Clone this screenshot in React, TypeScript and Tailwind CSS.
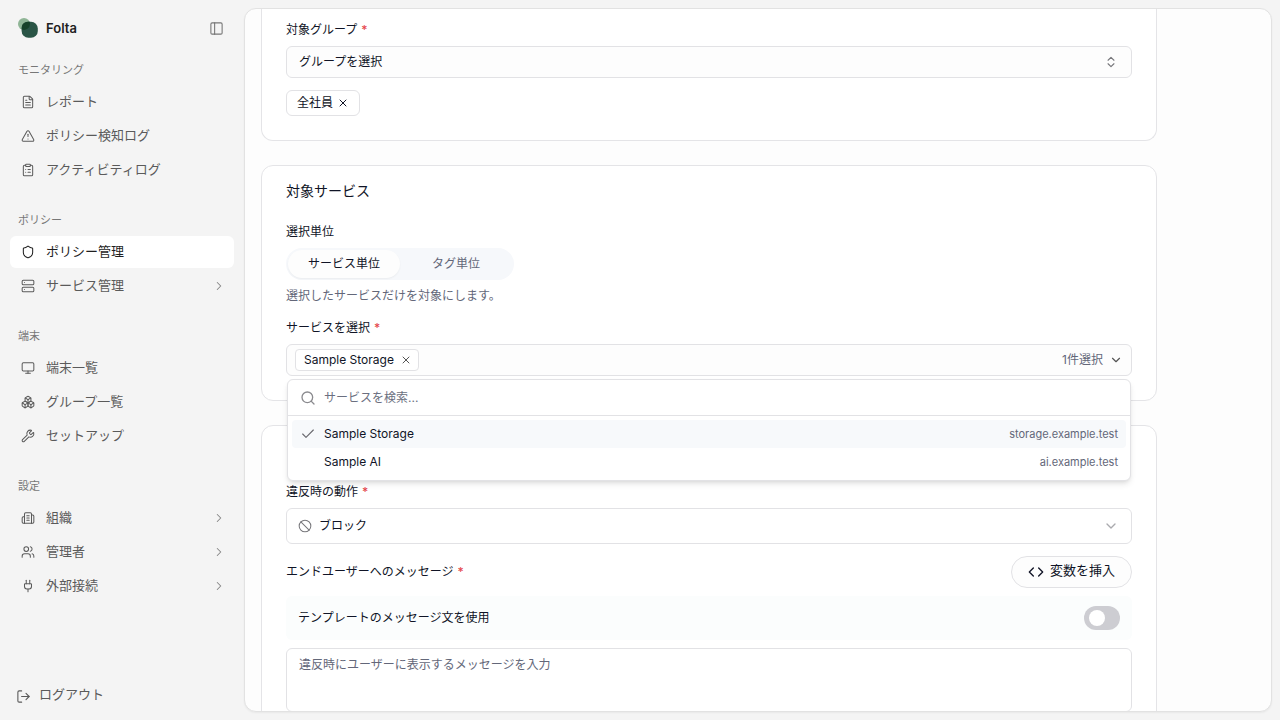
import { useState, type ReactNode } from "react";
import {
  Ban, Boxes, Check, ChevronDown, ChevronRight, ChevronsUpDown, ClipboardList, Code, FileText,
  LogOut, Monitor, PanelLeft, Plug, Search, Server, Shield, TriangleAlert, Users, Wrench, X,
  type LucideIcon,
} from "lucide-react";

function OrgIcon({ className }: { className?: string }) {
  return (
    <svg viewBox="0 0 24 24" fill="none" stroke="currentColor" strokeWidth="1.75" strokeLinecap="round" strokeLinejoin="round" className={className} aria-hidden="true">
      <path d="M10 12h4" />
      <path d="M10 8h4" />
      <path d="M10 16h4" />
      <path d="M6 10H4a2 2 0 0 0-2 2v7a2 2 0 0 0 2 2h16a2 2 0 0 0 2-2V9a2 2 0 0 0-2-2h-2" />
      <path d="M6 21V5a2 2 0 0 1 2-2h8a2 2 0 0 1 2 2v16" />
    </svg>
  );
}

type Item = { label: string; icon: LucideIcon | typeof OrgIcon; active?: boolean; expandable?: boolean };

const groups: { title: string; items: Item[] }[] = [
  {
    title: "モニタリング",
    items: [
      { label: "レポート", icon: FileText },
      { label: "ポリシー検知ログ", icon: TriangleAlert },
      { label: "アクティビティログ", icon: ClipboardList },
    ],
  },
  {
    title: "ポリシー",
    items: [
      { label: "ポリシー管理", icon: Shield, active: true },
      { label: "サービス管理", icon: Server, expandable: true },
    ],
  },
  {
    title: "端末",
    items: [
      { label: "端末一覧", icon: Monitor },
      { label: "グループ一覧", icon: Boxes },
      { label: "セットアップ", icon: Wrench },
    ],
  },
  {
    title: "設定",
    items: [
      { label: "組織", icon: OrgIcon, expandable: true },
      { label: "管理者", icon: Users, expandable: true },
      { label: "外部接続", icon: Plug, expandable: true },
    ],
  },
];

const services = [
  { name: "Sample Storage", host: "storage.example.test", selected: true },
  { name: "Sample AI", host: "ai.example.test", selected: false },
];

function Logo() {
  return (
    <svg viewBox="0 0 20 20" className="size-5" aria-hidden="true">
      <circle cx="6" cy="6" r="6" fill="#8fb596" />
      <rect x="3.6" y="3.8" width="16.2" height="16" rx="6.8" fill="#2a5546" />
      <path d="M12 6a6 6 0 0 1-8 5.6C3 8 5 3.800 10 3.800h1.600A6 6 0 0 1 12 6Z" fill="#17432a" />
    </svg>
  );
}

function Sidebar() {
  return (
    <aside className="flex w-[244px] shrink-0 flex-col px-2.5 pt-3 pb-2">
      <div className="flex h-8 items-center gap-2 pr-2.5 pl-2">
        <Logo />
        <span className="flex-1 pt-0.5 text-[13px] font-semibold text-[#1f1f1f]">Folta</span>
        <button type="button" aria-label="サイドバーを閉じる" className="text-[#777]">
          <PanelLeft className="size-[15px]" strokeWidth={1.75} />
        </button>
      </div>
      <nav className="mt-3 flex flex-col gap-5">
        {groups.map((g) => (
          <section key={g.title}>
            <h2 className="flex h-[30px] items-center px-2 pb-0.5 text-[11px] text-[#777]">{g.title}</h2>
            <ul className="flex flex-col gap-0.5">
              {g.items.map(({ label, icon: Icon, active, expandable }) => (
                <li key={label}>
                  <a
                    href="#"
                    aria-current={active ? "page" : undefined}
                    className={
                      active
                        ? "flex h-8 items-center gap-[11px] rounded-md bg-white pr-2 pl-[11px] text-[13px] text-[#1f1f1f]"
                        : "flex h-8 items-center gap-[11px] rounded-md pr-2 pl-[11px] text-[13px] text-[#5a5a5a]"
                    }
                  >
                    <Icon className="size-3.5 shrink-0" strokeWidth={1.75} />
                    <span className="flex-1">{label}</span>
                    {expandable && <ChevronRight className="size-3.5 text-[#858585]" strokeWidth={1.75} />}
                  </a>
                </li>
              ))}
            </ul>
          </section>
        ))}
      </nav>
      <button type="button" className="mt-auto flex h-8 items-center gap-2 px-1.5 text-[13px] text-[#5a5a5a]">
        <LogOut className="size-[15px] shrink-0" strokeWidth={1.75} />
        <span className="pb-0.5">ログアウト</span>
      </button>
    </aside>
  );
}

function FieldLabel({ htmlFor, children, required }: { htmlFor: string; children: ReactNode; required?: boolean }) {
  return (
    <label htmlFor={htmlFor} className="block h-4 text-xs text-[#101426]">
      {children}
      {required && <span className="ml-1 font-medium text-[#e5484d]">*</span>}
    </label>
  );
}

function ServicePicker() {
  const [query, setQuery] = useState("");
  return (
    <div className="relative mt-2">
      <div className="flex h-8 items-center rounded-md border border-[#e2e2e5] bg-[#fdfdfd] px-2 text-xs">
        <span className="flex h-[22px] items-center gap-1.5 rounded border border-[#e2e2e5] bg-white pr-1.5 pl-2 text-[#101426]">
          Sample Storage
          <button type="button" aria-label="Sample Storage を削除" className="text-[#555]">
            <X className="size-3" />
          </button>
        </span>
        <button id="service" type="button" aria-expanded="true" className="flex flex-1 items-center justify-end gap-1.5 text-[#636779]">
          <span>1件選択</span>
          <ChevronDown className="size-3.5 text-[#555]" />
        </button>
      </div>
      <div className="absolute inset-x-px top-full z-10 mt-[3px] rounded-md border border-[#e2e2e5] bg-white shadow-md">
        <div className="flex h-9 items-center gap-2 border-b border-[#e2e2e5] px-3">
          <Search className="size-4 shrink-0 text-[#8b8b8f]" />
          <input
            aria-label="サービスを検索"
            placeholder="サービスを検索..."
            value={query}
            onChange={(e) => setQuery(e.target.value)}
            className="min-w-0 flex-1 bg-transparent text-xs outline-none placeholder:text-[#6b6f80]"
          />
        </div>
        <ul role="listbox" aria-label="サービス" className="p-1">
          {services.map((s) => (
            <li
              key={s.name}
              role="option"
              aria-selected={s.selected}
              className={
                s.selected
                  ? "flex h-7 items-center gap-2 rounded bg-[#f7f9fb] px-2 text-xs"
                  : "flex h-7 items-center gap-2 rounded px-2 text-xs"
              }
            >
              <span className="size-4 shrink-0 text-[#6b6b70]">{s.selected && <Check className="size-4" strokeWidth={1.75} />}</span>
              <span className="flex-1 text-[#101426]">{s.name}</span>
              <span className="text-[11px] text-[#636779]">{s.host}</span>
            </li>
          ))}
        </ul>
      </div>
    </div>
  );
}

export default function App() {
  const [template, setTemplate] = useState(false);
  return (
    <div className="flex h-screen overflow-hidden bg-[#f4f4f4] font-['Inter','Noto_Sans_CJK_JP',sans-serif]">
      <Sidebar />
      <main className="my-2 mr-2 flex min-w-0 flex-1 flex-col overflow-hidden rounded-xl border border-[#e2e2e2] bg-[#fdfdfd] px-4 shadow-xs">
        <div className="flex w-full max-w-4xl shrink-0 flex-col gap-6">
          <section className="rounded-b-xl border border-t-0 border-[#e4e4e7] bg-white px-6 pt-[13px] pb-6">
            <FieldLabel htmlFor="group" required>対象グループ</FieldLabel>
            <div className="relative mt-2">
              <select id="group" className="h-8 w-full appearance-none rounded-md border border-[#e2e2e5] bg-[#fdfdfd] px-3 text-xs text-[#101426]">
                <option>グループを選択</option>
              </select>
              <ChevronsUpDown className="pointer-events-none absolute top-[9px] right-3.5 size-3.5 text-[#77777b]" />
            </div>
            <span className="mt-3 inline-flex h-[26px] items-center gap-1 rounded-md border border-[#e2e2e5] bg-white px-2.5 align-top text-xs text-[#101426]">
              <span>全社員</span>
              <button type="button" aria-label="全社員を削除">
                <X className="size-3" />
              </button>
            </span>
          </section>

          <section className="rounded-xl border border-[#e4e4e7] bg-white px-6 pt-[15px] pb-6">
            <h2 className="text-sm text-[#101426]">対象サービス</h2>
            <p id="unit" className="mt-[23px] h-4 text-xs text-[#101426]">選択単位</p>
            <div role="tablist" aria-labelledby="unit" className="mt-2 inline-grid h-8 grid-cols-2 rounded-full bg-[#f6f8fb] p-0.5 align-top text-xs">
              <button type="button" role="tab" aria-selected="true" className="w-28 rounded-full bg-[#fdfdfd] text-[#101426] shadow-xs">サービス単位</button>
              <button type="button" role="tab" aria-selected="false" className="w-28 rounded-full text-[#636779]">タグ単位</button>
            </div>
            <p className="mt-2 mb-4 h-4 text-xs text-[#636779]">選択したサービスだけを対象にします。</p>
            <FieldLabel htmlFor="service" required>サービスを選択</FieldLabel>
            <ServicePicker />
          </section>

          <section className="rounded-xl border border-[#e4e4e7] bg-white px-6 pt-[58px] pb-6">
            <FieldLabel htmlFor="action" required>違反時の動作</FieldLabel>
            <div className="relative mt-2">
              <Ban className="pointer-events-none absolute top-[11px] left-3 size-3.5 text-[#77777b]" strokeWidth={1.75} />
              <select id="action" className="h-9 w-full appearance-none rounded-md border border-[#e2e2e5] bg-white pr-8 pl-8 text-xs text-[#101426]">
                <option>ブロック</option>
              </select>
              <ChevronDown className="pointer-events-none absolute top-2.5 right-[13px] size-4 text-[#aaaaae]" />
            </div>
            <div className="mt-3 flex items-center justify-between">
              <FieldLabel htmlFor="message" required>エンドユーザーへのメッセージ</FieldLabel>
              <button type="button" className="flex h-8 items-center gap-1.5 rounded-full border border-[#e2e2e5] bg-[#fdfdfd] px-4 text-[13px] text-[#101426]">
                <Code className="size-4" />
                <span className="pb-0.5">変数を挿入</span>
              </button>
            </div>
            <label className="mt-2 flex h-11 items-center justify-between rounded-md bg-[#fbfdfd] px-3 text-xs text-[#101426]">
              <span>テンプレートのメッセージ文を使用</span>
              <input
                type="checkbox"
                role="switch"
                checked={template}
                onChange={(e) => setTemplate(e.target.checked)}
                className="h-6 w-9 appearance-none rounded-full bg-[#cdcdd2] before:mt-1 before:ml-[5px] before:block before:size-4 before:rounded-full before:bg-white checked:bg-[#2a5546] checked:before:ml-4"
              />
            </label>
            <textarea
              id="message"
              placeholder="違反時にユーザーに表示するメッセージを入力"
              className="mt-2 block h-16 w-full resize-none rounded-md border border-[#e2e2e5] bg-white px-3 py-2 text-xs outline-none placeholder:text-[#636779]"
            />
          </section>
        </div>
      </main>
    </div>
  );
}
